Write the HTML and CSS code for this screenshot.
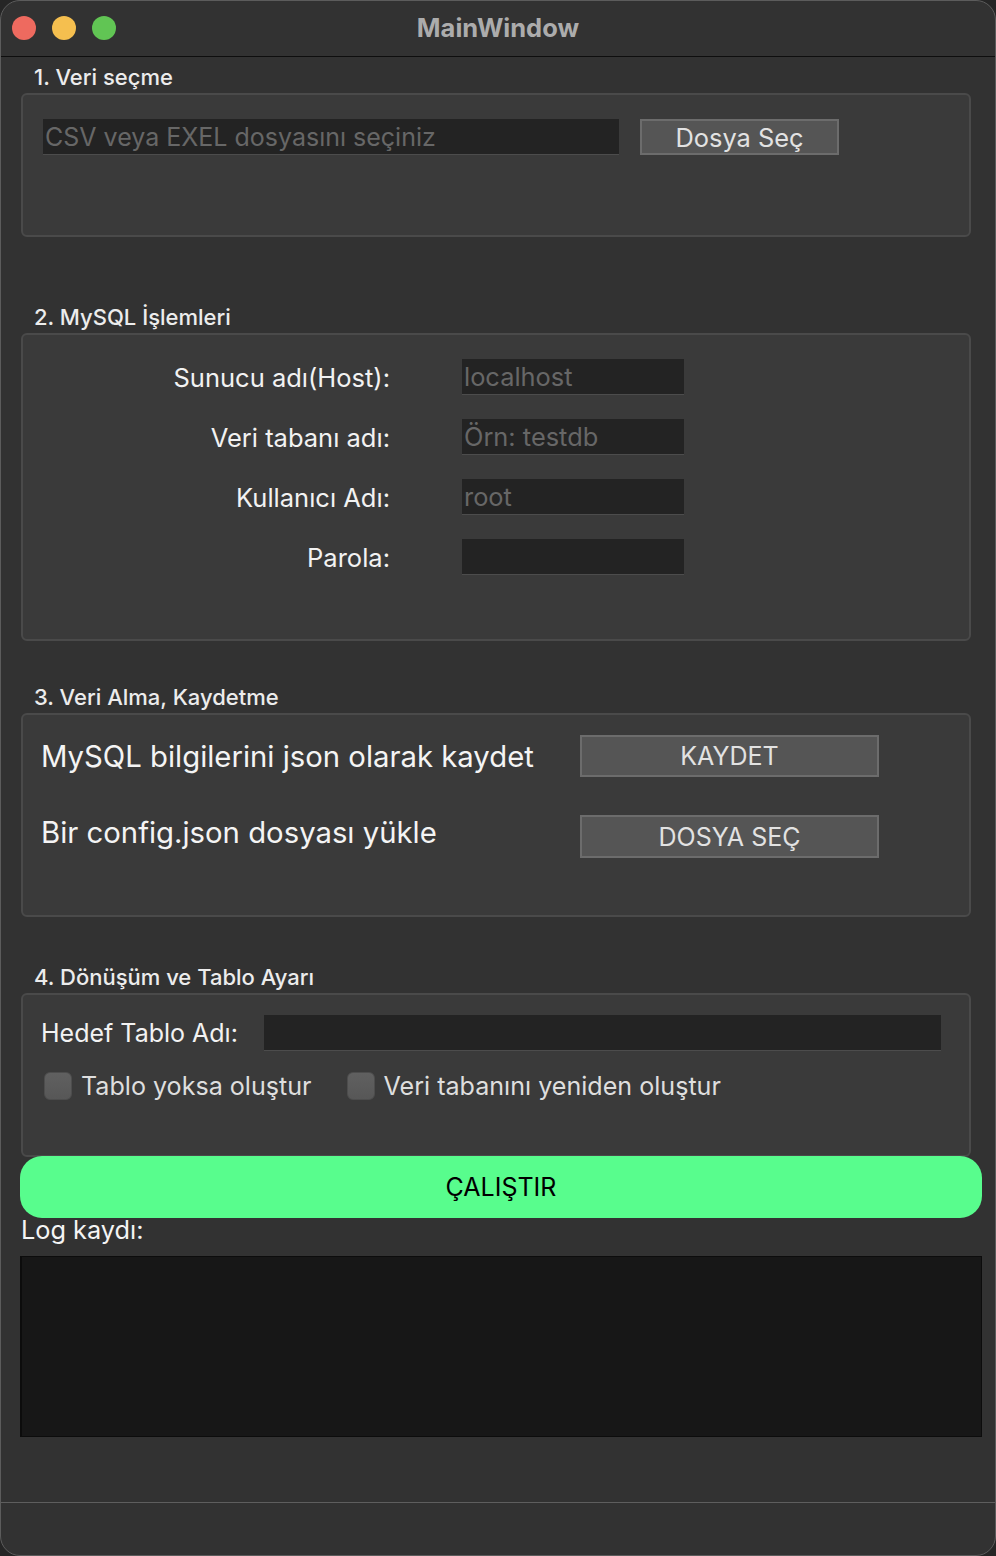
FILE: index.html
```html
<!DOCTYPE html>
<html lang="tr">
<head>
<meta charset="utf-8">
<title>MainWindow</title>
<link rel="stylesheet" href="styles.css">
</head>
<body>
<div class="window">
  <div class="titlebar">
    <div class="lights">
      <span class="light red"></span>
      <span class="light yellow"></span>
      <span class="light green"></span>
    </div>
    <div class="win-title">MainWindow</div>
  </div>
  <div class="central">
    <div class="group-title gt1">1. Veri seçme</div>
    <div class="group box1">
      <div class="row-file">
        <div class="field field-file placeholder">CSV veya EXEL dosyasını seçiniz</div>
        <div class="btn btn-file">Dosya Seç</div>
      </div>
    </div>

    <div class="group-title gt2">2. MySQL İşlemleri</div>
    <div class="group box2">
      <div class="form-grid">
        <div class="flabel">Sunucu adı(Host):</div>
        <div class="field field-small placeholder">localhost</div>
        <div class="flabel">Veri tabanı adı:</div>
        <div class="field field-small placeholder">Örn: testdb</div>
        <div class="flabel">Kullanıcı Adı:</div>
        <div class="field field-small placeholder">root</div>
        <div class="flabel">Parola:</div>
        <div class="field field-small"></div>
      </div>
    </div>

    <div class="group-title gt3">3. Veri Alma, Kaydetme</div>
    <div class="group box3">
      <div class="json-row r1">
        <div class="big-label">MySQL bilgilerini json olarak kaydet</div>
        <div class="btn btn-wide">KAYDET</div>
      </div>
      <div class="json-row r2">
        <div class="big-label">Bir config.json dosyası yükle</div>
        <div class="btn btn-wide">DOSYA SEÇ</div>
      </div>
    </div>

    <div class="group-title gt4">4. Dönüşüm ve Tablo Ayarı</div>
    <div class="group box4">
      <div class="table-row">
        <div class="label">Hedef Tablo Adı:</div>
        <div class="field field-grow"></div>
      </div>
      <div class="check-row">
        <label class="check"><span class="check-box"></span><span class="check-text">Tablo yoksa oluştur</span></label>
        <label class="check"><span class="check-box"></span><span class="check-text">Veri tabanını yeniden oluştur</span></label>
      </div>
    </div>

    <div class="run-btn">ÇALIŞTIR</div>
    <div class="log-label">Log kaydı:</div>
    <div class="log-box"></div>
  </div>
  <div class="statusbar"></div>
</div>
</body>
</html>
```
FILE: styles.css
```css
* { box-sizing: border-box; }
html, body { margin: 0; padding: 0; }
body {
  background: #262626;
  font-family: "Inter", "Liberation Sans", sans-serif;
  width: 996px;
  height: 1556px;
  overflow: hidden;
}
.window {
  width: 996px;
  height: 1556px;
  background: #323232;
  border: 1px solid #5c5c5c;
  border-radius: 20px;
  display: flex;
  flex-direction: column;
  overflow: hidden;
}
.titlebar {
  height: 56px;
  flex: none;
  border-bottom: 1px solid #0e0e0e;
  display: flex;
  align-items: center;
  justify-content: center;
  position: relative;
}
.lights {
  position: absolute;
  left: 11px;
  top: 15px;
  display: flex;
  gap: 16px;
}
.light {
  width: 24px;
  height: 24px;
  border-radius: 50%;
  display: block;
}
.red { background: #ee6a5f; }
.yellow { background: #f5bf4f; }
.green { background: #61c554; }
.win-title {
  color: #acacac;
  font-size: 25.5px;
  font-weight: 700;
  margin-top: -2px;
}
.central {
  flex: 1;
  display: flex;
  flex-direction: column;
  padding: 0 13px 0 19px;
}
.group-title {
  height: 24px;
  line-height: 24px;
  font-size: 22px;
  font-weight: 500;
  color: #ececec;
  padding-left: 14px;
}
.gt1 { margin-top: 8px; }
.gt2 { margin-top: 68px; }
.gt3 { margin-top: 44px; }
.gt4 { margin-top: 48px; }
.group {
  margin-top: 4px;
  margin-left: 1px;
  width: 950px;
  background: #3a3a3a;
  border: 2px solid #4a4a4a;
  border-radius: 6px;
}
.field {
  background: #232323;
  border-bottom: 1px solid #4c4c4c;
  height: 36px;
  display: flex;
  align-items: center;
  font-size: 25.4px;
  color: #e6e6e6;
  padding-left: 2px;
  white-space: nowrap;
  overflow: hidden;
}
.field-file { font-size: 25px; }
.placeholder { color: #676767; }
.btn {
  background: #555555;
  border: 2px solid #6c6c6c;
  color: #e2e2e2;
  display: flex;
  align-items: center;
  justify-content: center;
  font-size: 25px;
}
/* box 1 */
.box1 { padding: 24px 0 80px 20px; }
.row-file { display: flex; gap: 21px; }
.field-file { width: 576px; }
.btn-file { width: 199px; height: 36px; font-size: 25.4px; }
/* box 2 */
.box2 { padding: 24px 0 64px 0; }
.form-grid {
  display: grid;
  grid-template-columns: 367px 222px;
  column-gap: 72px;
  row-gap: 24px;
}
.flabel {
  text-align: right;
  font-size: 25.5px;
  color: #f2f2f2;
  display: flex;
  align-items: center;
  justify-content: flex-end;
  height: 36px;
}
.field-small { width: 222px; }
/* box 3 */
.box3 { padding: 20px 0 57px 18px; }
.json-row { display: flex; align-items: center; }
.json-row.r1 { height: 42px; }
.json-row.r2 { height: 43px; margin-top: 38px; }
.big-label {
  width: 539px;
  font-size: 29.3px;
  color: #f4f4f4;
  white-space: nowrap;
}
.json-row.r2 .big-label { margin-top: -8px; }
.btn-wide { width: 299px; height: 100%; }
/* box 4 */
.box4 { padding: 20px 28px 55px 18px; }
.table-row { display: flex; align-items: center; gap: 26px; height: 36px; }
.label { font-size: 25px; color: #f2f2f2; white-space: nowrap; }
.field-grow { flex: 1; }
.check-row {
  display: flex;
  align-items: center;
  gap: 35px;
  margin-top: 21px;
  height: 28px;
  padding-left: 3px;
}
.check { display: flex; align-items: center; gap: 9px; }
.check-box {
  width: 28px;
  height: 28px;
  border-radius: 6px;
  background: linear-gradient(#606060, #575757);
  border: 1px solid #4d4d4d;
  display: block;
}
.check-text { font-size: 25.1px; color: #dedede; white-space: nowrap; }
/* run */
.run-btn {
  margin-top: -1px;
  height: 62px;
  border-radius: 22px;
  background: #58fd8d;
  color: #000;
  font-size: 25px;
  display: flex;
  align-items: center;
  justify-content: center;
}
.log-label {
  margin-top: -1px;
  height: 26px;
  line-height: 26px;
  font-size: 25.3px;
  color: #f4f4f4;
  padding-left: 1px;
}
.log-box {
  margin-top: 13px;
  height: 181px;
  background: #171717;
  border: 1px solid #0c0c0c;
  border-left-width: 2px;
}
.statusbar {
  height: 53px;
  flex: none;
  border-top: 1px solid #5e5e5e;
}
```
